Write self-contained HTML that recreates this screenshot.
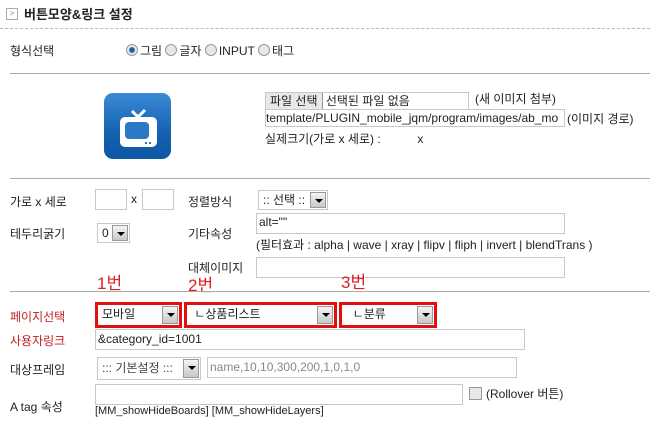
<!DOCTYPE html><html><head><meta charset="utf-8"><style>
body{margin:0;width:650px;height:425px;background:#fff;position:relative;overflow:hidden;font-family:"Liberation Sans","Noto Sans CJK KR",sans-serif;font-size:12px;color:#222}
.a{position:absolute;white-space:nowrap}
.inp{position:absolute;border:1px solid #c8c8c8;background:#fff;box-sizing:border-box;font-size:12px;line-height:16px;padding-left:2px;overflow:hidden;white-space:nowrap}
.sel{position:absolute;border:1px solid #c8c8c8;background:#fff;box-sizing:border-box;font-size:12px;padding-left:4px;overflow:hidden;white-space:nowrap}
.arr{position:absolute;right:1px;top:1px;bottom:1px;width:16px;background:linear-gradient(#f4f4f4,#c8c8c8);border:1px solid #999;box-sizing:border-box}
.arr:after{content:"";position:absolute;left:4px;top:6px;border-left:4px solid transparent;border-right:4px solid transparent;border-top:4px solid #000}
.red{position:absolute;border:3px solid #e01010;box-sizing:border-box}
.rad{display:inline-block;width:10px;height:10px;border:1px solid #999;border-radius:50%;background:#e8e8e8;vertical-align:-1px;margin-right:2px}
</style></head><body>
<div class="a" style="left:6px;top:8px;width:10px;height:10px;border:1px solid #aaa;font-size:8px;line-height:10px;text-align:center;color:#888">&gt;</div>
<div class="a" style="left:24px;top:4px;font-weight:bold;font-size:13px">버튼모양&amp;링크 설정</div>
<div class="a" style="left:0;top:28px;width:650px;border-top:1px dashed #bbb"></div>
<div class="a" style="left:10px;top:42px">형식선택</div>
<div class="a" style="left:126px;top:42px"><span class="rad" style="background:radial-gradient(#1f5fa8 35%,#e8e8e8 45%)"></span>그림 <span class="rad"></span>글자 <span class="rad"></span>INPUT <span class="rad"></span>태그</div>
<div class="a" style="left:10px;top:73px;width:640px;border-top:1px solid #aaa"></div>
<div class="a" style="left:104px;top:93px;width:67px;height:66px;border-radius:9px;background:linear-gradient(#3b8ad6,#1462b0 60%,#0d57a3)"></div>
<svg class="a" style="left:104px;top:93px" width="67" height="66"><path d="M28 18 L34 24 L41 17" stroke="#fff" stroke-width="3" fill="none"/><rect x="16" y="24" width="37" height="30" rx="5" fill="#fff"/><rect x="21" y="29" width="24" height="17" rx="4" fill="#2a78c6"/><rect x="41" y="49" width="2" height="2" fill="#2a78c6"/><rect x="45" y="49" width="2" height="2" fill="#2a78c6"/></svg>
<div class="inp" style="left:265px;top:92px;width:204px;height:18px;padding:0"><span style="display:inline-block;background:#e8e8e8;border-right:1px solid #999;padding:0 4px">파일 선택</span> 선택된 파일 없음</div>
<div class="a" style="left:475px;top:90px">(새 이미지 첨부)</div>
<div class="inp" style="left:265px;top:109px;width:300px;height:18px;padding:0">template/PLUGIN_mobile_jqm/program/images/ab_mo</div>
<div class="a" style="left:567px;top:110px">(이미지 경로)</div>
<div class="a" style="left:265px;top:130px">실제크기(가로 x 세로) :&nbsp;&nbsp;&nbsp;&nbsp;&nbsp;&nbsp;&nbsp;&nbsp;&nbsp;&nbsp;&nbsp;x</div>
<div class="a" style="left:10px;top:178px;width:640px;border-top:1px solid #aaa"></div>
<div class="a" style="left:10px;top:193px">가로 x 세로</div>
<div class="inp" style="left:95px;top:189px;width:32px;height:21px"></div>
<div class="a" style="left:131px;top:192px">x</div>
<div class="inp" style="left:142px;top:189px;width:32px;height:21px"></div>
<div class="a" style="left:188px;top:193px">정렬방식</div>
<div class="sel" style="left:258px;top:190px;width:70px;height:20px;line-height:18px">:: 선택 ::<div class="arr"></div></div>
<div class="a" style="left:10px;top:225px">테두리굵기</div>
<div class="sel" style="left:97px;top:223px;width:33px;height:20px;line-height:18px">0<div class="arr"></div></div>
<div class="a" style="left:188px;top:225px">기타속성</div>
<div class="inp" style="left:256px;top:213px;width:309px;height:21px">alt=""</div>
<div class="a" style="left:256px;top:236px">(필터효과 : alpha | wave | xray | flipv | fliph | invert | blendTrans )</div>
<div class="a" style="left:188px;top:259px">대체이미지</div>
<div class="inp" style="left:256px;top:257px;width:309px;height:21px"></div>
<div class="a" style="left:97px;top:269px;color:#e02020;font-size:17px">1번</div>
<div class="a" style="left:188px;top:271px;color:#e02020;font-size:17px">2번</div>
<div class="a" style="left:341px;top:268px;color:#e02020;font-size:17px">3번</div>
<div class="a" style="left:10px;top:291px;width:640px;border-top:1px solid #aaa"></div>
<div class="a" style="left:10px;top:308px;color:#c02020">페이지선택</div>
<div class="red" style="left:95px;top:302px;width:87px;height:26px"></div>
<div class="sel" style="left:98px;top:305px;width:81px;height:20px;line-height:18px;border:none">모바일<div class="arr"></div></div>
<div class="red" style="left:184px;top:302px;width:153px;height:26px"></div>
<div class="sel" style="left:187px;top:305px;width:147px;height:20px;line-height:18px;border:none">&nbsp;ㄴ상품리스트<div class="arr"></div></div>
<div class="red" style="left:339px;top:302px;width:98px;height:26px"></div>
<div class="sel" style="left:342px;top:305px;width:92px;height:20px;line-height:18px;border:none">&nbsp;&nbsp;ㄴ분류<div class="arr"></div></div>
<div class="a" style="left:10px;top:332px;color:#c02020">사용자링크</div>
<div class="inp" style="left:95px;top:329px;width:430px;height:21px;line-height:19px">&amp;category_id=1001</div>
<div class="a" style="left:10px;top:361px">대상프레임</div>
<div class="sel" style="left:97px;top:357px;width:104px;height:23px;line-height:21px;color:#444">::: 기본설정 :::<div class="arr"></div></div>
<div class="inp" style="left:207px;top:357px;width:310px;height:21px;line-height:19px;color:#888">name,10,10,300,200,1,0,1,0</div>
<div class="a" style="left:10px;top:398px">A tag 속성</div>
<div class="inp" style="left:95px;top:384px;width:368px;height:21px"></div>
<div class="a" style="left:469px;top:387px;width:11px;height:11px;border:1px solid #999;background:#e8e8e8"></div>
<div class="a" style="left:486px;top:385px">(Rollover 버튼)</div>
<div class="a" style="left:95px;top:405px;font-size:11px">[MM_showHideBoards] [MM_showHideLayers]</div>
</body></html>
